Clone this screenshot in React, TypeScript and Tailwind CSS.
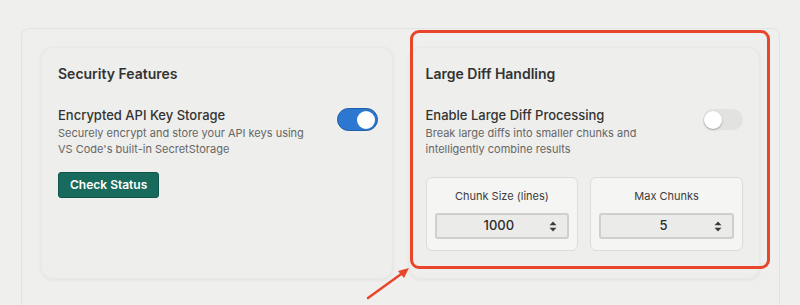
function Toggle({ on }: { on: boolean }) {
    return on ? (
        <div className="w-[41px] h-[23px] rounded-full bg-[#2c78d0] border border-[#1f5fa8] flex items-center justify-end px-[2px]">
            <div className="w-[18px] h-[18px] rounded-full bg-white" />
        </div>
    ) : (
        <div className="w-[40px] h-[21px] rounded-full bg-[#e2e2e0] flex items-center px-[1px]">
            <div className="w-[18px] h-[18px] rounded-full bg-white shadow-[0_1px_2px_rgba(0,0,0,0.3)]" />
        </div>
    );
}

function NumberBox({ label, value }: { label: string; value: string }) {
    return (
        <div className="h-[74px] rounded-md border border-[#dcdcda] bg-[#f5f5f4] px-[8px] pt-[10px] flex flex-col items-center">
            <div className="text-[11px] leading-[16px] text-[#3c3c3c]">{label}</div>
            <div className="mt-[9px] w-full h-[26px] rounded-[3px] border-2 border-[#cfcfcd] bg-[#ebebea] flex items-center pl-[12px] pr-[10px]">
                <span className="flex-1 text-center text-[13px] font-medium text-[#2b2b2b]">{value}</span>
                {/* stepper arrows */}
                <svg width="8" height="11" viewBox="0 0 8 11">
                    <polygon points="4,0.5 7.5,4.2 0.5,4.2" fill="#3a3a3a" />
                    <polygon points="4,10.5 7.5,6.8 0.5,6.8" fill="#3a3a3a" />
                </svg>
            </div>
        </div>
    );
}

export default function App() {
    return (
        <div
            className="relative w-[800px] h-[305px] overflow-hidden bg-[#efefed] pt-[28px] pl-[21px] pr-[20px]"
            style={{ fontFamily: 'Inter, "Noto Sans", sans-serif' }}
        >
            {/* Outer panel */}
            <div className="h-[300px] rounded-lg border border-[#e3e3e1] bg-[#efefed] px-[19px] pt-[18px]">
                <div className="grid grid-cols-2 gap-[16px]">
                    {/* Security */}
                    <div className="h-[232px] rounded-xl bg-[#eeeeec] shadow-[0_1px_4px_rgba(0,0,0,0.06)] border border-[#e8e8e6] px-[16px] pt-[16px]">
                        <h2 className="text-[14px] leading-[20px] font-semibold text-[#333]">Security Features</h2>
                        <div className="mt-[22px] flex items-start justify-between">
                            <div>
                                <div className="text-[13px] leading-[18px] font-medium text-[#333]">Encrypted API Key Storage</div>
                                <p className="mt-[1px] text-[11px] leading-[16px] text-[#666]">
                                    Securely encrypt and store your API keys using
                                    <br />
                                    VS Code's built-in SecretStorage
                                </p>
                            </div>
                            <div className="mt-[2px] mr-[-2px]">
                                <Toggle on />
                            </div>
                        </div>
                        <button className="mt-[15px] h-[26px] px-[11px] rounded-[3px] bg-[#176a5c] border border-[#0f5549] text-white text-[12px] font-semibold">
                            Check Status
                        </button>
                    </div>

                    {/* Large diff */}
                    <div className="h-[232px] rounded-xl bg-[#eeeeec] shadow-[0_1px_4px_rgba(0,0,0,0.06)] border border-[#e8e8e6] px-[16px] pt-[16px]">
                        <h2 className="text-[14px] leading-[20px] font-semibold text-[#333]">Large Diff Handling</h2>
                        <div className="mt-[22px] flex items-start justify-between">
                            <div>
                                <div className="text-[13px] leading-[18px] font-medium text-[#333]">Enable Large Diff Processing</div>
                                <p className="mt-[1px] text-[11px] leading-[16px] text-[#666]">
                                    Break large diffs into smaller chunks and
                                    <br />
                                    intelligently combine results
                                </p>
                            </div>
                            <div className="mt-[3px]">
                                <Toggle on={false} />
                            </div>
                        </div>
                        <div className="mt-[20px] grid grid-cols-2 gap-[12px]">
                            <NumberBox label="Chunk Size (lines)" value="1000" />
                            <NumberBox label="Max Chunks" value="5" />
                        </div>
                    </div>
                </div>
            </div>

            {/* Annotation */}
            <div className="absolute left-[410px] top-[30px] w-[360px] h-[239px] rounded-[9px] border-[3px] border-[#e8462b] pointer-events-none" />
            <svg className="absolute left-0 top-0 pointer-events-none" width="800" height="305">
                <line x1="368" y1="298" x2="404" y2="272" stroke="#e8462b" strokeWidth="2.5" strokeLinecap="round" />
                <polygon points="409,268 398,271 404,278" fill="#e8462b" />
            </svg>
        </div>
    );
}
